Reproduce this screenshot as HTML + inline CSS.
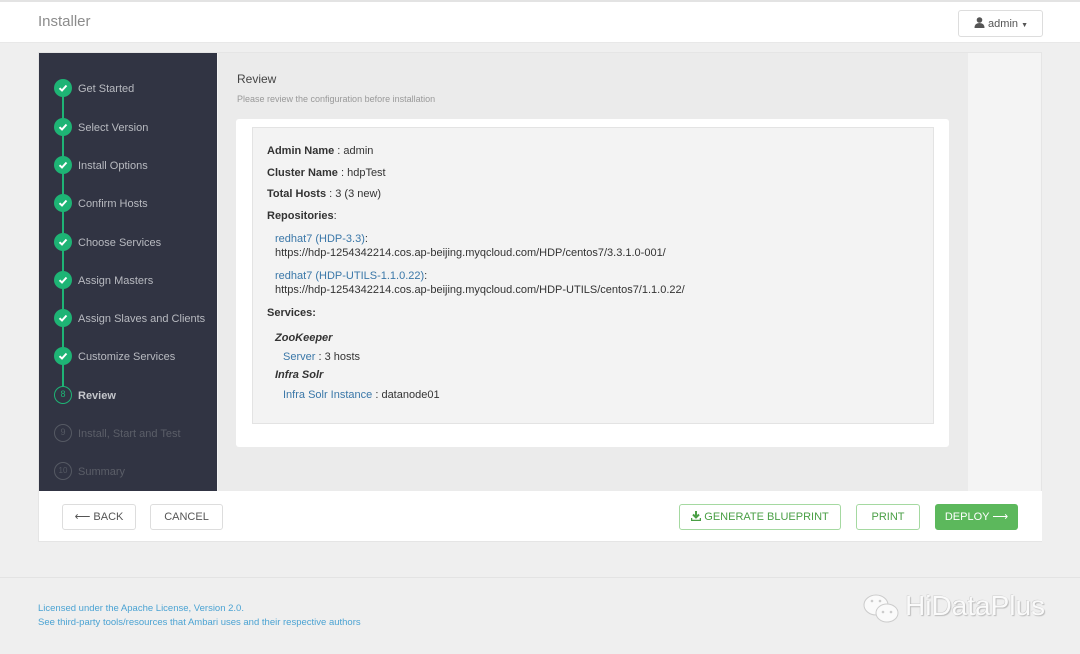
<!DOCTYPE html>
<html><head><meta charset="utf-8"><style>
*{margin:0;padding:0;box-sizing:border-box}
body{width:1080px;height:654px;background:#efefef;font-family:"Liberation Sans",sans-serif;position:relative;overflow:hidden;color:#333}
.a{position:absolute}
.step{position:absolute;left:78px;font-size:11px;color:#b8bac0;line-height:14px;margin-top:1px}
.c{position:absolute;left:54px;width:18px;height:18px;border-radius:50%;background:#1eb475;}
.c svg{position:absolute;left:4px;top:4px}
.n{position:absolute;left:54px;width:18px;height:18px;border-radius:50%;border:1.5px solid #555963;color:#555963;font-size:9px;text-align:center;line-height:15px}
.t{font-size:11px;position:absolute;left:267px;line-height:14px;margin-top:1px}
.t b{font-weight:bold}
.l{color:#3a77a8}
.btn{position:absolute;top:504px;height:26px;border:1px solid #ddd;border-radius:3px;background:#fff;font-size:11px;color:#555;text-align:center;line-height:25px}
.g{border-color:#a5d9a1;color:#4a9f45}
</style></head><body>
<div class="a" style="left:0;top:0;width:1080px;height:43px;background:#fff;border-top:2px solid #e3e3e3;border-bottom:1px solid #e8e8e8"></div>
<div class="a" style="left:38px;top:13px;font-size:15px;color:#8c8c8c">Installer</div>
<div class="a" style="left:958px;top:10px;width:85px;height:27px;border:1px solid #ddd;border-radius:3px;background:#fff;font-size:11px;color:#555;line-height:26px;padding-left:15px">
<svg width="11" height="11" viewBox="0 0 11 11" style="vertical-align:-1px"><circle cx="5.5" cy="3" r="2.8" fill="#555"/><path d="M0.5 11 Q0.5 6 5.5 6 Q10.5 6 10.5 11Z" fill="#555"/></svg> admin <span style="font-size:7px">▼</span></div>

<div class="a" style="left:38px;top:52px;width:1004px;height:490px;background:#f4f4f4;border:1px solid #e5e5e5"></div>
<div class="a" style="left:218px;top:53px;width:750px;height:438px;background:#ebebeb"></div>
<div class="a" style="left:39px;top:53px;width:178px;height:438px;background:#313443"></div>
<div class="a" style="left:62px;top:90px;width:2px;height:300px;background:#1eb475"></div>

<div class="c" style="top:79px"><svg width="10" height="10" viewBox="0 0 10 10"><path d="M1.5 5.2 L4 7.5 L8.5 2.5" stroke="#fff" stroke-width="2" fill="none"/></svg></div><div class="step" style="top:81px">Get Started</div>
<div class="c" style="top:118px"><svg width="10" height="10" viewBox="0 0 10 10"><path d="M1.5 5.2 L4 7.5 L8.5 2.5" stroke="#fff" stroke-width="2" fill="none"/></svg></div><div class="step" style="top:120px">Select Version</div>
<div class="c" style="top:156px"><svg width="10" height="10" viewBox="0 0 10 10"><path d="M1.5 5.2 L4 7.5 L8.5 2.5" stroke="#fff" stroke-width="2" fill="none"/></svg></div><div class="step" style="top:158px">Install Options</div>
<div class="c" style="top:194px"><svg width="10" height="10" viewBox="0 0 10 10"><path d="M1.5 5.2 L4 7.5 L8.5 2.5" stroke="#fff" stroke-width="2" fill="none"/></svg></div><div class="step" style="top:196px">Confirm Hosts</div>
<div class="c" style="top:233px"><svg width="10" height="10" viewBox="0 0 10 10"><path d="M1.5 5.2 L4 7.5 L8.5 2.5" stroke="#fff" stroke-width="2" fill="none"/></svg></div><div class="step" style="top:235px">Choose Services</div>
<div class="c" style="top:271px"><svg width="10" height="10" viewBox="0 0 10 10"><path d="M1.5 5.2 L4 7.5 L8.5 2.5" stroke="#fff" stroke-width="2" fill="none"/></svg></div><div class="step" style="top:273px">Assign Masters</div>
<div class="c" style="top:309px"><svg width="10" height="10" viewBox="0 0 10 10"><path d="M1.5 5.2 L4 7.5 L8.5 2.5" stroke="#fff" stroke-width="2" fill="none"/></svg></div><div class="step" style="top:311px">Assign Slaves and Clients</div>
<div class="c" style="top:347px"><svg width="10" height="10" viewBox="0 0 10 10"><path d="M1.5 5.2 L4 7.5 L8.5 2.5" stroke="#fff" stroke-width="2" fill="none"/></svg></div><div class="step" style="top:349px">Customize Services</div>
<div class="n" style="top:386px;border-color:#1eb475;background:#313443;color:#1eb475">8</div><div class="step" style="top:388px;font-weight:bold;color:#c4c6cb">Review</div>
<div class="n" style="top:424px">9</div><div class="step" style="top:426px;color:#5b5e68">Install, Start and Test</div>
<div class="n" style="top:462px;font-size:8px">10</div><div class="step" style="top:464px;color:#5b5e68">Summary</div>

<div class="a" style="left:237px;top:72px;font-size:12px;color:#444">Review</div>
<div class="a" style="left:237px;top:94px;font-size:9px;color:#999">Please review the configuration before installation</div>
<div class="a" style="left:236px;top:119px;width:713px;height:328px;background:#fff;border-radius:3px"></div>
<div class="a" style="left:252px;top:127px;width:682px;height:297px;background:#f3f3f3;border:1px solid #e3e3e3"></div>
<div class="t" style="top:143px"><b>Admin Name</b> : admin</div>
<div class="t" style="top:165px"><b>Cluster Name</b> : hdpTest</div>
<div class="t" style="top:186px"><b>Total Hosts</b> : 3 (3 new)</div>
<div class="t" style="top:208px"><b>Repositories</b>:</div>
<div class="t" style="top:231px;left:275px"><span class="l">redhat7 (HDP-3.3)</span>:<br>https://hdp-1254342214.cos.ap-beijing.myqcloud.com/HDP/centos7/3.3.1.0-001/</div>
<div class="t" style="top:268px;left:275px"><span class="l">redhat7 (HDP-UTILS-1.1.0.22)</span>:<br>https://hdp-1254342214.cos.ap-beijing.myqcloud.com/HDP-UTILS/centos7/1.1.0.22/</div>
<div class="t" style="top:305px"><b>Services:</b></div>
<div class="t" style="top:330px;left:275px"><b><i>ZooKeeper</i></b></div>
<div class="t" style="top:349px;left:283px"><span class="l">Server</span> : 3 hosts</div>
<div class="t" style="top:367px;left:275px"><b><i>Infra Solr</i></b></div>
<div class="t" style="top:387px;left:283px"><span class="l">Infra Solr Instance</span> : datanode01</div>

<div class="a" style="left:39px;top:491px;width:1003px;height:50px;background:#fff"></div>
<div class="btn" style="left:62px;width:74px">⟵ BACK</div>
<div class="btn" style="left:150px;width:73px">CANCEL</div>
<div class="btn g" style="left:679px;width:162px"><svg width="10" height="10" viewBox="0 0 10 10" style="vertical-align:-1px"><path d="M5 0V6M2 3.5L5 6.5L8 3.5" stroke="#4a9f45" stroke-width="2" fill="none"/><path d="M0.5 7V9.5H9.5V7" stroke="#4a9f45" stroke-width="1.5" fill="none"/></svg> GENERATE BLUEPRINT</div>
<div class="btn g" style="left:856px;width:64px">PRINT</div>
<div class="btn" style="left:935px;width:83px;background:#5cb85c;border-color:#5cb85c;color:#fff">DEPLOY ⟶</div>

<div class="a" style="left:0;top:577px;width:1080px;height:1px;background:#e3e3e3"></div>
<div class="a" style="left:38px;top:602px;font-size:9.5px;color:#4ba3d3;line-height:14px">Licensed under the Apache License, Version 2.0.<br>See third-party tools/resources that Ambari uses and their respective authors</div>
<svg class="a" style="left:862px;top:591px" width="40" height="36" viewBox="0 0 40 36"><ellipse cx="14" cy="14" rx="12" ry="10" fill="#fafafa" stroke="#ccc"/><ellipse cx="25" cy="22" rx="11" ry="9" fill="#fafafa" stroke="#ccc"/><circle cx="21" cy="21" r="1.3" fill="#ccc"/><circle cx="29" cy="21" r="1.3" fill="#ccc"/><circle cx="10" cy="10" r="1.3" fill="#ccc"/><circle cx="18" cy="10" r="1.3" fill="#ccc"/></svg>
<div class="a" style="left:905px;top:590px;font-size:28px;color:#fafafa;text-shadow:1px 1px 1px #bbb,-0.5px -0.5px 0 #ccc">HiDataPlus</div>
</body></html>
